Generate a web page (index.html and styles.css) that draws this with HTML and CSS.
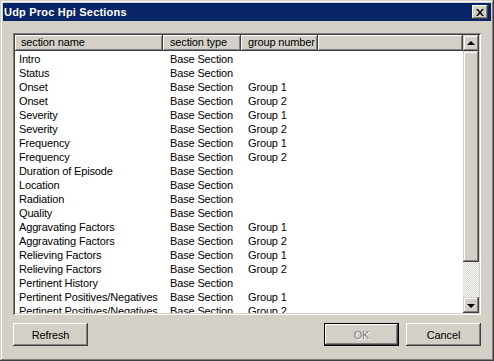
FILE: index.html
```html
<!DOCTYPE html>
<html>
<head>
<meta charset="utf-8">
<link rel="stylesheet" href="styles.css">
</head>
<body>
<div class="window">
  <div class="titlebar">
    <span class="title">Udp Proc Hpi Sections</span>
    <span class="close"><svg width="8" height="7" viewBox="0 0 8 7"><path d="M0 0h2l2 2.5L6 0h2L5 3.5 8 7H6L4 4.5 2 7H0l3-3.5z" fill="#000"/></svg></span>
  </div>
  <div class="content">
    <div class="listbox">
      <div class="listmain">
        <div class="header">
          <div class="hcell c1">section name</div>
          <div class="hcell c2">section type</div>
          <div class="hcell c3">group number</div>
          <div class="hcell rest"></div>
        </div>
        <div class="rows">
          <div class="row"><span class="d1">Intro</span><span class="d2">Base Section</span><span class="d3"></span></div>
          <div class="row"><span class="d1">Status</span><span class="d2">Base Section</span><span class="d3"></span></div>
          <div class="row"><span class="d1">Onset</span><span class="d2">Base Section</span><span class="d3">Group 1</span></div>
          <div class="row"><span class="d1">Onset</span><span class="d2">Base Section</span><span class="d3">Group 2</span></div>
          <div class="row"><span class="d1">Severity</span><span class="d2">Base Section</span><span class="d3">Group 1</span></div>
          <div class="row"><span class="d1">Severity</span><span class="d2">Base Section</span><span class="d3">Group 2</span></div>
          <div class="row"><span class="d1">Frequency</span><span class="d2">Base Section</span><span class="d3">Group 1</span></div>
          <div class="row"><span class="d1">Frequency</span><span class="d2">Base Section</span><span class="d3">Group 2</span></div>
          <div class="row"><span class="d1">Duration of Episode</span><span class="d2">Base Section</span><span class="d3"></span></div>
          <div class="row"><span class="d1">Location</span><span class="d2">Base Section</span><span class="d3"></span></div>
          <div class="row"><span class="d1">Radiation</span><span class="d2">Base Section</span><span class="d3"></span></div>
          <div class="row"><span class="d1">Quality</span><span class="d2">Base Section</span><span class="d3"></span></div>
          <div class="row"><span class="d1">Aggravating Factors</span><span class="d2">Base Section</span><span class="d3">Group 1</span></div>
          <div class="row"><span class="d1">Aggravating Factors</span><span class="d2">Base Section</span><span class="d3">Group 2</span></div>
          <div class="row"><span class="d1">Relieving Factors</span><span class="d2">Base Section</span><span class="d3">Group 1</span></div>
          <div class="row"><span class="d1">Relieving Factors</span><span class="d2">Base Section</span><span class="d3">Group 2</span></div>
          <div class="row"><span class="d1">Pertinent History</span><span class="d2">Base Section</span><span class="d3"></span></div>
          <div class="row"><span class="d1">Pertinent Positives/Negatives</span><span class="d2">Base Section</span><span class="d3">Group 1</span></div>
          <div class="row"><span class="d1">Pertinent Positives/Negatives</span><span class="d2">Base Section</span><span class="d3">Group 2</span></div>
        </div>
      </div>
      <div class="scrollbar">
        <div class="sbtn"><span class="tri up"></span></div>
        <div class="thumb"></div>
        <div class="track"></div>
        <div class="sbtn"><span class="tri down"></span></div>
      </div>
    </div>
    <div class="buttons">
      <div class="btn">Refresh</div>
      <div class="spacer"></div>
      <div class="btn default disabled"><span>OK</span></div>
      <div class="btn">Cancel</div>
    </div>
  </div>
</div>
</body>
</html>
```
FILE: styles.css
```css
html, body {
  margin: 0;
  padding: 0;
  background: #D4D0C8;
}
body {
  font-family: "Liberation Sans", Arial, sans-serif;
  font-size: 11px;
  letter-spacing: -0.15px;
  color: #000;
}
.window {
  width: 494px;
  height: 361px;
  box-sizing: border-box;
  padding: 3px;
  background: #D4D0C8;
  box-shadow: inset -1px -1px #404040, inset 1px 1px #D4D0C8, inset -2px -2px #808080, inset 2px 2px #fff;
  display: flex;
  flex-direction: column;
}
.titlebar {
  height: 18px;
  background: #0A246A;
  display: flex;
  align-items: center;
  justify-content: space-between;
  padding: 0 3px 0 1px;
}
.title {
  color: #fff;
  font-weight: bold;
  font-size: 11px;
  font-family: "Liberation Sans", Arial, sans-serif;
  letter-spacing: 0.2px;
}
.close {
  width: 16px;
  height: 14px;
  box-sizing: border-box;
  background: #D4D0C8;
  box-shadow: inset -1px -1px #404040, inset 1px 1px #fff, inset -2px -2px #808080;
  display: flex;
  align-items: center;
  justify-content: center;
}
.close svg { display: block; }
.content {
  padding: 12px 10px 0 10px;
  display: flex;
  flex-direction: column;
}
.listbox {
  width: 468px;
  height: 282px;
  box-sizing: border-box;
  padding: 2px;
  background: #fff;
  box-shadow: inset 1px 1px #808080, inset -1px -1px #fff, inset 2px 2px #404040, inset -2px -2px #D4D0C8;
  display: flex;
  overflow: hidden;
}
.listmain {
  flex: 1;
  overflow: hidden;
  display: flex;
  flex-direction: column;
}
.header {
  display: grid;
  grid-template-columns: 148px 78px 77px 1fr;
  height: 16px;
  flex: none;
}
.hcell {
  background: #D4D0C8;
  box-shadow: inset -1px -1px #404040, inset 1px 1px #fff, inset -2px -2px #808080;
  line-height: 15px;
  padding-left: 7px;
  white-space: nowrap;
  overflow: hidden;
}
.hcell.c1 { padding-left: 6px; }
.rows {
  flex: 1;
  overflow: hidden;
  padding-top: 1px;
}
.row {
  display: grid;
  grid-template-columns: 148px 78px 77px;
  height: 14px;
  line-height: 14px;
  white-space: nowrap;
}
.d1 { padding-left: 4px; overflow: hidden; }
.d2, .d3 { padding-left: 7px; overflow: hidden; }
.scrollbar {
  width: 16px;
  flex: none;
  display: flex;
  flex-direction: column;
}
.sbtn {
  height: 16px;
  flex: none;
  background: #D4D0C8;
  box-shadow: inset -1px -1px #404040, inset 1px 1px #D4D0C8, inset -2px -2px #808080, inset 2px 2px #fff;
  display: flex;
  align-items: center;
  justify-content: center;
}
.tri {
  width: 0;
  height: 0;
  border-left: 4px solid transparent;
  border-right: 4px solid transparent;
}
.tri.up { border-bottom: 4px solid #000; margin-top: -1px; }
.tri.down { border-top: 4px solid #000; margin-top: 1px; }
.thumb {
  height: 211px;
  flex: none;
  background: #D4D0C8;
  box-shadow: inset -1px -1px #404040, inset 1px 1px #D4D0C8, inset -2px -2px #808080, inset 2px 2px #fff;
}
.track {
  flex: 1;
  background: conic-gradient(#fff 25%, #D4D0C8 0 50%, #fff 0 75%, #D4D0C8 0) 0 0 / 2px 2px;
}
.buttons {
  display: flex;
  margin-top: 8px;
  gap: 7px;
}
.spacer { flex: 1; }
.btn {
  width: 75px;
  height: 23px;
  box-sizing: border-box;
  background: #D4D0C8;
  box-shadow: inset -1px -1px #404040, inset 1px 1px #fff, inset -2px -2px #808080, inset 2px 2px #D4D0C8;
  display: flex;
  align-items: center;
  justify-content: center;
  font-size: 11px;
}
.btn.default {
  box-shadow: inset 0 0 0 1px #000, inset -2px -2px #404040, inset 2px 2px #fff, inset -3px -3px #808080;
}
.btn.disabled span {
  color: #808080;
  text-shadow: 1px 1px #fff;
}
```
